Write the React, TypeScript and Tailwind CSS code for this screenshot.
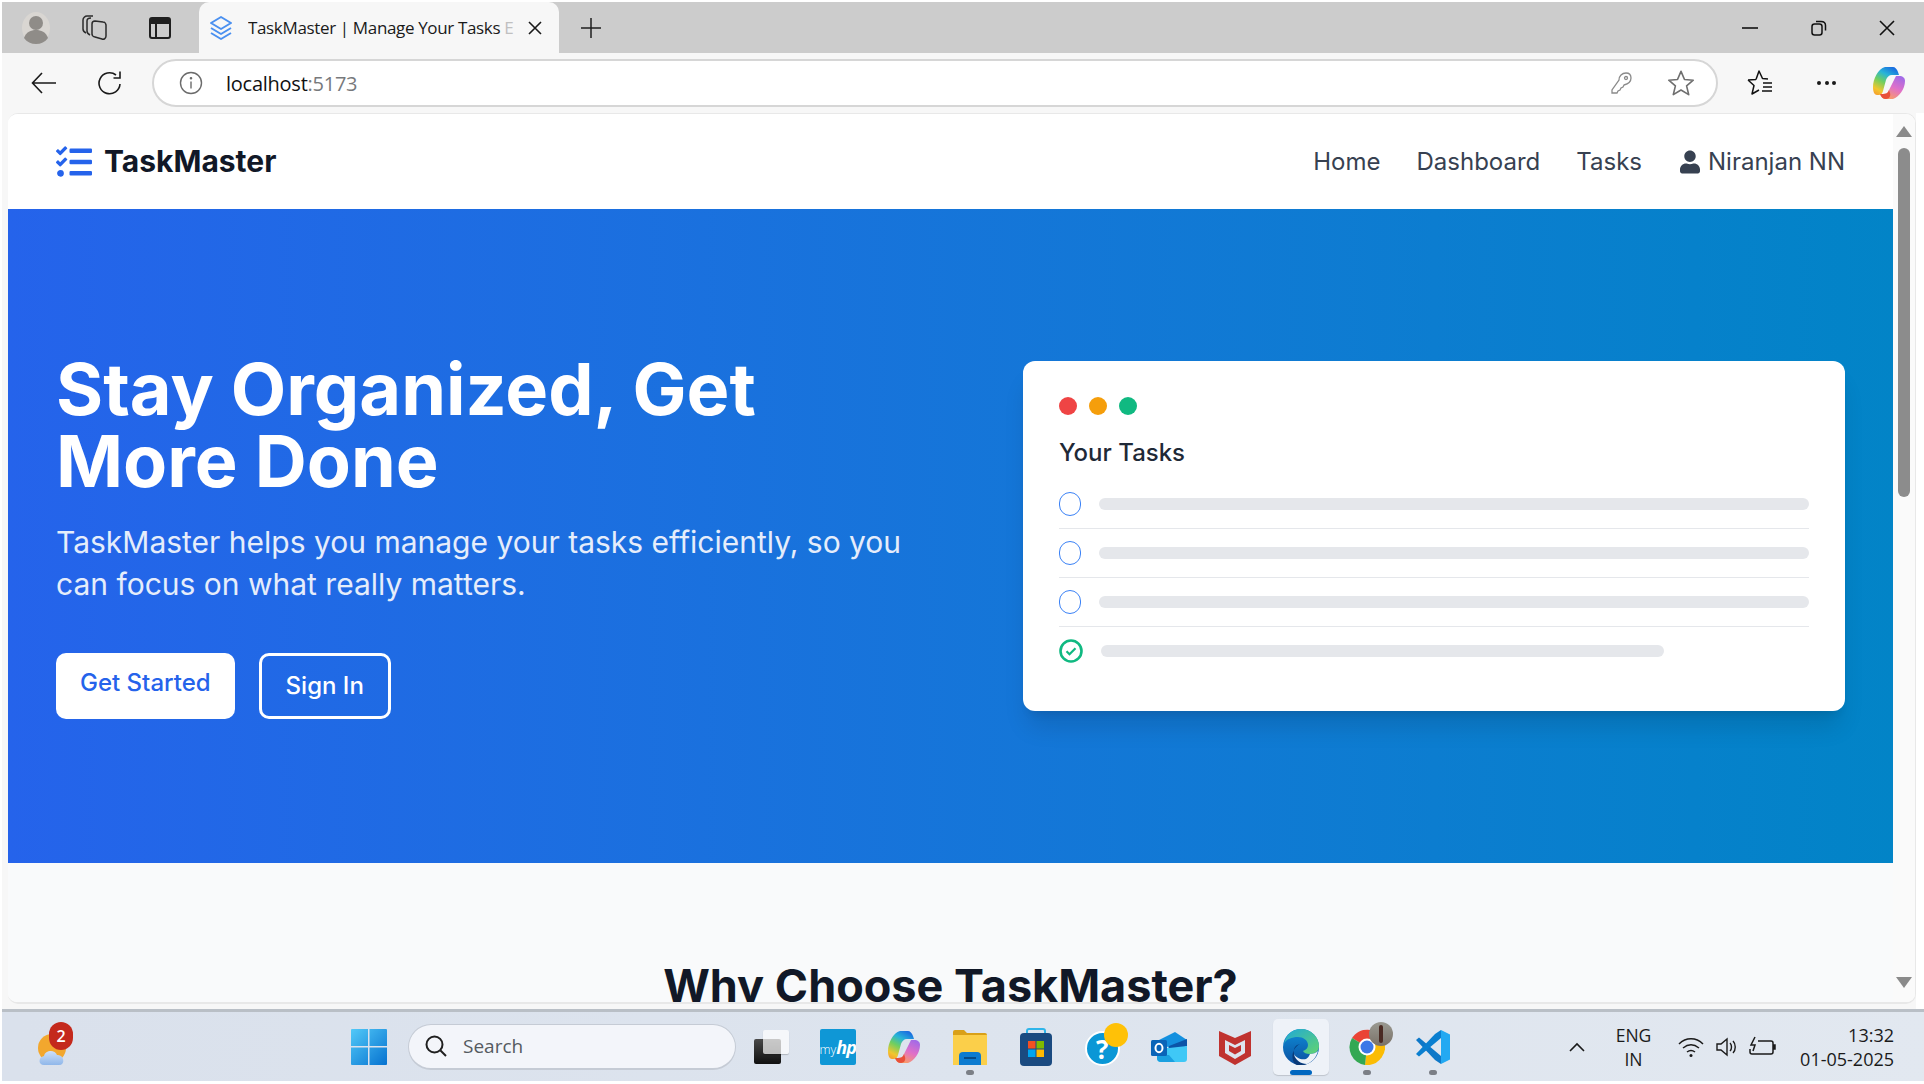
import React from "react";
import { FaTasks, FaUser } from "react-icons/fa";

const ui = "font-['Open_Sans','Noto_Sans',sans-serif]";

function Slot({ w = "w-[66.4px]", dot, active, children }: { w?: string; dot?: boolean; active?: boolean; children: React.ReactNode }) {
  return (
    <div className={`relative h-[56px] flex items-center justify-center shrink-0 ${w}`}>
      {active && <span className="absolute left-1/2 -ml-[28px] top-0 w-[56px] h-[56px] rounded-[5px] bg-[#eef2f8] shadow-[0_1px_1px_rgba(0,0,0,0.15)]" />}
      <div className="relative flex items-center justify-center">{children}</div>
      {dot && <span className="absolute bottom-[0px] left-1/2 -ml-[4px] w-[8px] h-[5px] rounded-full bg-[#7b7f86]" />}
      {active && <span className="absolute bottom-[0px] left-1/2 -ml-[11px] w-[22px] h-[5px] rounded-full bg-[#0067c0]" />}
    </div>
  );
}

function Copilot({ s = 36 }: { s?: number }) {
  return (
    <svg width={s} height={s} viewBox="0 0 36 36">
      <defs>
        <linearGradient id="cpb" x1="0.7" y1="0" x2="0.2" y2="1"><stop offset="0" stopColor="#1a6fe0" /><stop offset="0.28" stopColor="#27b4d8" /><stop offset="0.55" stopColor="#6fcf60" /><stop offset="0.85" stopColor="#f2c62e" /><stop offset="1" stopColor="#f5a52e" /></linearGradient>
        <linearGradient id="cpc" x1="0.8" y1="0" x2="0.3" y2="1"><stop offset="0" stopColor="#a06ae8" /><stop offset="0.5" stopColor="#e070c8" /><stop offset="1" stopColor="#fba060" /></linearGradient>
      </defs>
      <path d="M2 22C2 14 7 4 14 2h8c2 0 4 2 5 5l1 3h-7c-3 0-5 2-6 5l-3 11c-1 4-3 4-6 4-3 0-4-4-4-8z" fill="url(#cpb)" />
      <path d="M25 11h3c4 0 6 2 6 5 0 8-6 16-12 18h-7c-3 0-5-2-6-5h3c3 0 5-1 6-4z" fill="url(#cpc)" />
      <path d="M9 29h3c3 0 5-1 6-4l1 3c1 3-1 6-4 6-3 0-5-2-6-5z" fill="#e8503a" />
    </svg>
  );
}

function TaskRow({ done, last, w = "w-full" }: { done?: boolean; last?: boolean; w?: string }) {
  return (
    <div className={`flex items-center ${last ? "h-[48px]" : "h-[49px] border-b border-[#e5e7eb]"}`}>
      {done ? (
        <svg width="24" height="24" viewBox="0 0 24 24" className="shrink-0 mr-[18px]">
          <circle cx="12" cy="12" r="10.5" fill="none" stroke="#10b981" strokeWidth="2.6" />
          <path d="M7.5 12.2l3 3 6-6" fill="none" stroke="#10b981" strokeWidth="2.2" />
        </svg>
      ) : (
        <span className="shrink-0 w-[22px] h-[24px] rounded-full border border-[#3b82f6] mr-[18px]" />
      )}
      <div className="flex-1 min-w-0">
        <div className={`h-[12px] rounded-full bg-[#e5e7eb] ${w}`} />
      </div>
    </div>
  );
}

export default function App() {
  return (
    <div className="w-[1924px] h-[1084px] overflow-hidden bg-white flex flex-col">
      {/* tab strip */}
      <div className={`mt-[2px] ml-[2px] h-[51px] shrink-0 bg-[#cccccc] flex items-center ${ui}`}>
        <div className="w-[67px] flex justify-center">
          <svg width="30" height="34" viewBox="0 0 30 34">
            <ellipse cx="15" cy="17" rx="14" ry="16" fill="#d9d6d2" />
            <circle cx="15" cy="12" r="7" fill="#8f8c88" />
            <path d="M3 27c2-6 7-8 12-8s10 2 12 8c-3 4-7 6-12 6s-9-2-12-6z" fill="#8f8c88" />
          </svg>
        </div>
        <div className="w-[52px] flex justify-center">
          <svg width="26" height="28" viewBox="0 0 26 28" fill="none" stroke="#2b2b2b" strokeWidth="1.5" strokeLinejoin="round">
            <path d="M8 21c-2-1-3-2-3-4V7c0-2 2-3 4-3" />
            <path d="M4 19c-2-1-3-2-3-4V6c0-2 2-4 4-4h6" />
            <path d="M10 10c0-2 1-3 3-3l8 1c2 0 3 2 3 3v11c0 2-2 4-4 3l-7-2c-2 0-3-2-3-3z" />
          </svg>
        </div>
        <div className="w-[78px] flex justify-center">
          <div className="w-[22px] h-[22px] rounded-[3px] border-2 border-[#1f1f1f] relative">
            <div className="h-[5px] bg-[#1f1f1f]" />
            <div className="absolute left-[4px] top-[5px] bottom-0 w-[1.5px] bg-[#1f1f1f]" />
          </div>
        </div>
        <div className="relative self-stretch w-[360px] bg-[#f7f7f7] rounded-t-[10px] flex items-center">
          <svg width="24" height="26" viewBox="0 0 24 26" className="ml-[10px]" fill="none" stroke="#4a90f0" strokeWidth="2" strokeLinejoin="round">
            <path d="M12 2l10 6-10 6-10-6z" />
            <path d="M2 13l10 6 10-6" />
            <path d="M2 18l10 6 10-6" />
          </svg>
          <span className="ml-[15px] text-[17px] tracking-[-0.35px] text-[#1a1a1a] whitespace-nowrap w-[268px] overflow-hidden">TaskMaster | Manage Your Tasks <span className="text-[#c0c0c0]">E</span></span>
          <svg width="16" height="16" viewBox="0 0 16 16" className="ml-[11px]" stroke="#1a1a1a" strokeWidth="1.6"><path d="M2 2l12 12M14 2L2 14" /></svg>
        </div>
        <svg width="22" height="22" viewBox="0 0 22 22" className="ml-[21px]" stroke="#1f1f1f" strokeWidth="1.5"><path d="M11 1v20M1 11h20" /></svg>
        <div className="flex-1" />
        <svg width="16" height="16" viewBox="0 0 16 16" className="mr-[53px]" stroke="#111" strokeWidth="1.6"><path d="M0 8h16" /></svg>
        <svg width="16" height="16" viewBox="0 0 16 16" className="mr-[52px]" fill="none" stroke="#111" strokeWidth="1.5"><rect x="1" y="4" width="10" height="11" rx="2.5" /><path d="M5 1.5h5c3 0 4.500 1.500 4.500 4v5" /></svg>
        <svg width="16" height="16" viewBox="0 0 16 16" className="mr-[29px]" stroke="#111" strokeWidth="1.6"><path d="M1 1l14 14M15 1L1 15" /></svg>
      </div>

      {/* toolbar */}
      <div className={`ml-[2px] h-[60px] shrink-0 bg-[#f7f7f7] flex items-center ${ui}`}>
        <svg width="26" height="24" viewBox="0 0 26 24" className="ml-[29px]" fill="none" stroke="#1a1a1a" strokeWidth="1.6"><path d="M25 12H2M11 2L1.500 12l9.500 10" /></svg>
        <svg width="26" height="26" viewBox="0 0 26 26" className="ml-[40px]" fill="none" stroke="#1a1a1a" strokeWidth="1.6"><path d="M23 14a10.500 10.500 0 1 1-4-9" /><path d="M23 1.500V8h-6.500" /></svg>
        <div className="ml-[29px] w-[1566px] h-[48px] rounded-full bg-white border-2 border-[#d6d6d6] flex items-center">
          <svg width="24" height="24" viewBox="0 0 24 24" className="ml-[25px]" fill="none" stroke="#6b6b6b" strokeWidth="1.4"><circle cx="12" cy="12" r="10.500" /><path d="M12 10.500v7" /><circle cx="12" cy="7.200" r="0.6" fill="#6b6b6b" /></svg>
          <span className="ml-[23px] mt-[1px] text-[20px] tracking-[-0.25px] text-[#111] whitespace-nowrap">localhost<span className="text-[#77797c]">:5173</span></span>
          <div className="flex-1" />
          <svg width="22" height="24" viewBox="0 0 22 24" fill="none" stroke="#8a8a8a" strokeWidth="1.300"><path d="M9 9c0-4 3-7 7-7 3 0 5 2 5 5 0 4-3 6-7 7l-1 2-2 1-1 2-2 1-1 2H2l0-3z" /><circle cx="16" cy="7" r="1.500" /></svg>
          <svg width="28" height="28" viewBox="0 0 24 24" className="ml-[35px] mr-[21px]" fill="none" stroke="#6f6f6f" strokeWidth="1.4" strokeLinejoin="round"><path d="M12 2l3 7 7.500.6-5.700 4.900 1.800 7.500L12 18l-6.600 4 1.800-7.500L1.500 9.600 9 9z" /></svg>
        </div>
        <svg width="28" height="28" viewBox="0 0 28 28" className="ml-[27px]" fill="none" stroke="#111" strokeWidth="1.500" strokeLinejoin="round"><path d="M11 10.500L14 2l3.500 7.500 5.500.5M3 11l8-.5M3 11l6 5.500L7 25l7-4" /><path d="M18 14h9M18 18h9M17 22h10" /></svg>
        <div className="ml-[44px] flex gap-[3.500px]">
          <span className="w-[4px] h-[4px] rounded-full bg-[#1a1a1a]" /><span className="w-[4px] h-[4px] rounded-full bg-[#1a1a1a]" /><span className="w-[4px] h-[4px] rounded-full bg-[#1a1a1a]" />
        </div>
        <div className="ml-[35px]"><Copilot s={36} /></div>
      </div>

      {/* viewport */}
      <div className="ml-[2px] mr-[8px] h-[897px] shrink-0 bg-[#f7f7f7] pl-[6px] pb-[6px]">
        <div className="h-[891px] rounded-[10px] overflow-hidden bg-white border-b-2 border-r border-t border-[#e8e8e8] flex font-['Inter',sans-serif]">
          <div className="w-[1885px] shrink-0 h-[891px] overflow-hidden bg-[#f9fafb]">
            <nav className="h-[95px] bg-white flex items-center justify-between px-[48px]">
              <div className="flex items-center gap-[12px]">
                <FaTasks className="text-[#2563eb] w-[36px] h-[36px]" />
                <span className="text-[30px] font-bold text-[#111827]">TaskMaster</span>
              </div>
              <div className="flex items-center text-[24px] text-[#374151]">
                <span>Home</span>
                <span className="ml-[36px]">Dashboard</span>
                <span className="ml-[36px]">Tasks</span>
                <span className="ml-[38px] flex items-center gap-[8px]"><FaUser className="w-[20px] h-[24px]" />Niranjan NN</span>
              </div>
            </nav>
            <section className="h-[654px] bg-gradient-to-r from-[#2563eb] to-[#0284c7] flex items-center justify-between px-[48px]">
              <div className="w-[860px]">
                <h1 className="text-[72px] leading-[72px] font-bold text-white">Stay Organized, Get<br />More Done</h1>
                <p className="mt-[24px] text-[30px] leading-[42px] text-[#e5edfb]">TaskMaster helps you manage your tasks efficiently, so you can focus on what really matters.</p>
                <div className="mt-[48px] flex gap-[24px]">
                  <span className="h-[66px] px-[24px] pb-[7px] rounded-[10px] bg-white text-[#2563eb] text-[24px] font-medium flex items-center">Get Started</span>
                  <span className="h-[66px] px-[24px] rounded-[10px] border-[3px] border-white text-white text-[24px] font-medium flex items-center">Sign In</span>
                </div>
              </div>
              <div className="w-[822px] h-[350px] bg-white rounded-[12px] p-[36px] shadow-[0_20px_25px_-5px_rgba(0,0,0,0.12),0_8px_10px_-6px_rgba(0,0,0,0.1)]">
                <div className="flex gap-[12px]">
                  <span className="w-[18px] h-[18px] rounded-full bg-[#ef4444]" />
                  <span className="w-[18px] h-[18px] rounded-full bg-[#f59e0b]" />
                  <span className="w-[18px] h-[18px] rounded-full bg-[#10b981]" />
                </div>
                <h3 className="mt-[23px] text-[24px] leading-[30px] font-medium text-[#1f2937]">Your Tasks</h3>
                <div className="mt-[12px]">
                  <TaskRow />
                  <TaskRow />
                  <TaskRow />
                  <TaskRow done last w="w-[79.5%]" />
                </div>
              </div>
            </section>
            <h2 className="mt-[95px] text-center text-[45px] leading-[56px] font-bold text-[#111827]">Why Choose TaskMaster?</h2>
          </div>
          <div className="flex-1 bg-[#fafafa] relative">
            <div className="mx-auto mt-[12px] w-0 h-0 border-x-[8px] border-x-transparent border-b-[11px] border-b-[#8a8a8a]" />
            <div className="mx-auto mt-[11px] w-[12px] h-[349px] rounded-full bg-[#8c8c8c]" />
            <div className="absolute left-1/2 -ml-[8px] bottom-[14px] w-0 h-0 border-x-[8px] border-x-transparent border-t-[11px] border-t-[#8a8a8a]" />
          </div>
        </div>
      </div>

      {/* taskbar */}
      <div className={`h-[72px] shrink-0 ml-[2px] mt-[-1px] border-t-[3px] border-[#b9bfc6] bg-gradient-to-r from-[#dae1ec] via-[#dde4ee] to-[#e2e8f0] flex items-center ${ui}`}>
        <div className="relative ml-[35px] w-[40px] h-[46px] shrink-0">
          <svg width="40" height="46" viewBox="0 0 40 46" className="absolute inset-0">
            <defs><linearGradient id="cl" x1="0" y1="0" x2="0" y2="1"><stop offset="0" stopColor="#cfe0f8" /><stop offset="1" stopColor="#8fb7ea" /></linearGradient></defs>
            <circle cx="15" cy="24" r="14" fill="#f2a72e" />
            <path d="M7 41c-6 0-6-8 0-9 1-6 11-7 13-1 7-1 9 10 2 10z" fill="url(#cl)" />
          </svg>
          <span className="absolute -top-[2px] left-[12px] w-[24px] h-[28px] rounded-full bg-[#c4291c] text-white text-[16px] font-semibold flex items-center justify-center">2</span>
        </div>
        <svg width="36" height="36" viewBox="0 0 36 36" className="ml-[274px] shrink-0">
          <defs><linearGradient id="w" x1="0" y1="0" x2="1" y2="1"><stop offset="0" stopColor="#52c9f8" /><stop offset="1" stopColor="#0672d0" /></linearGradient></defs>
          <path d="M0 1a1 1 0 0 1 1-1h16v17H0zM18.500 0H35a1 1 0 0 1 1 1v16H18.500zM0 18.500h17V36H1a1 1 0 0 1-1-1zM18.500 18.500H36V35a1 1 0 0 1-1 1H18.500z" fill="url(#w)" />
        </svg>
        <div className="ml-[21px] w-[328px] h-[46px] shrink-0 rounded-full bg-[#f3f5fa] border border-[#c5cbd5] border-b-2 flex items-center">
          <svg width="24" height="24" viewBox="0 0 24 24" className="ml-[15px]" fill="none" stroke="#1f1f1f" strokeWidth="2"><circle cx="10.500" cy="10.500" r="8" /><path d="M16.500 16.500L22 22" /></svg>
          <span className="ml-[15px] text-[19px] text-[#555a60]">Search</span>
        </div>
        <Slot w="w-[69px]">
          <div className="relative ml-[2px] w-[35px] h-[34px]">
            <div className="absolute left-0 bottom-0 w-[27px] h-[25px] rounded-[2px] bg-gradient-to-b from-[#4a4a4a] to-[#111]" />
            <div className="absolute right-0 top-0 w-[26px] h-[24px] rounded-[2px] bg-[#ffffff]/70 shadow-[0_1px_1px_rgba(0,0,0,0.2)]" />
          </div>
        </Slot>
        <Slot w="w-[65.4px]">
          <div className="w-[36px] h-[36px] rounded-[2px] bg-[#0f97d6] text-white flex items-baseline justify-center whitespace-nowrap overflow-hidden">
            <span className="text-[12.500px] leading-[36px] font-light">my</span><span className="text-[18px] leading-[36px] font-bold italic tracking-[-1px]">hp</span>
          </div>
        </Slot>
        <Slot><Copilot s={36} /></Slot>
        <Slot dot>
          <svg width="34" height="36" viewBox="0 0 34 36">
            <path d="M0 3a2 2 0 0 1 2-2h9l3 3h18a2 2 0 0 1 2 2v4H0z" fill="#d9a018" />
            <path d="M0 6h34v30H0z" fill="#fbcf4a" />
            <path d="M6 36V27a4 4 0 0 1 4-4h14a4 4 0 0 1 4 4v9z" fill="#0c7bd0" />
            <path d="M11 29h12" stroke="#064a86" strokeWidth="2" />
          </svg>
        </Slot>
        <Slot>
          <svg width="34" height="38" viewBox="0 0 34 38">
            <path d="M8 8V3a2 2 0 0 1 2-2h14a2 2 0 0 1 2 2v5" fill="none" stroke="#2fb5ea" strokeWidth="2" />
            <rect x="1" y="5" width="32" height="33" rx="4" fill="#1a4a80" />
            <rect x="9" y="13" width="7.500" height="7.500" fill="#f25022" /><rect x="17.500" y="13" width="7.500" height="7.500" fill="#7fba00" />
            <rect x="9" y="21.500" width="7.500" height="7.500" fill="#00a4ef" /><rect x="17.500" y="21.500" width="7.500" height="7.500" fill="#ffb900" />
          </svg>
        </Slot>
        <Slot>
          <div className="relative w-[36px] h-[36px] mt-[3px]">
            <div className="absolute left-0 bottom-0 w-[35px] h-[35px] rounded-full bg-[#0a97d6] border-2 border-white text-white font-bold text-[26px] leading-none flex items-center justify-center">?</div>
            <div className="absolute left-[19px] top-[-7px] w-[24px] h-[24px] rounded-full bg-[#ffc107]" />
          </div>
        </Slot>
        <Slot>
          <svg width="36" height="30" viewBox="0 0 36 30">
            <path d="M8 8L24 0l12 8-18 8z" fill="#1490df" />
            <path d="M18 14l18-7v7l-18 7z" fill="#0b54a8" />
            <path d="M6 16h12l18-2v13a3 3 0 0 1-3 3H10a4 4 0 0 1-4-4z" fill="#3fc8f6" />
            <path d="M6 23h12l6 7H10a4 4 0 0 1-4-4z" fill="#1aa0e0" />
            <rect x="0" y="8" width="16" height="16" rx="1.500" fill="#0a64b8" />
            <ellipse cx="8" cy="16" rx="3.500" ry="4.200" fill="none" stroke="#fff" strokeWidth="2" />
          </svg>
        </Slot>
        <Slot w="w-[65px]">
          <svg width="32" height="36" viewBox="0 0 32 36"><path d="M0 2l16 7 16-7v25l-16 9-16-9z" fill="#c0322f" /><path d="M6 11l10 5 10-5v13l-10 6-10-6z" fill="#dde4ee" /><path d="M10 16v6l6 3.500 6-3.500v-6l-6 3z" fill="#c0322f" /></svg>
        </Slot>
        <Slot active>
          <svg width="36" height="36" viewBox="0 0 36 36">
            <defs>
              <linearGradient id="e1" x1="0" y1="0" x2="1" y2="1"><stop offset="0" stopColor="#1fa8d8" /><stop offset="1" stopColor="#62d470" /></linearGradient>
              <linearGradient id="e2" x1="0" y1="0" x2="0" y2="1"><stop offset="0" stopColor="#0f8ed8" /><stop offset="1" stopColor="#0b4fa0" /></linearGradient>
            </defs>
            <circle cx="18" cy="18" r="18" fill="url(#e2)" />
            <path d="M1 15C3 5 10 0 18 0c10 0 18 8 18 17 0 5-4 8-9 8-4 0-6-1-7-3 3-1 5-3 5-6 0-5-5-8-10-8C9 8 3 10 1 15z" fill="url(#e1)" />
            <path d="M17 15c-5 1-7 5-6 10 1 6 7 10 13 10-4 2-9 1-10 1C8 34 7 20 17 15z" fill="#0a3a78" />
            <path d="M27 25c3 0 6-1 8-3-2 7-6 11-11 13-6 0-12-4-13-10 2 4 7 6 12 5 2-1 3-3 4-5z" fill="#eef2f8" />
          </svg>
        </Slot>
        <Slot dot>
          <div className="relative w-[36px] h-[36px]">
            <svg width="36" height="36" viewBox="0 0 36 36">
              <path d="M18 18L3 9A18 18 0 0 1 34 10z" fill="#ea4335" />
              <path d="M18 18l16-8a18 18 0 0 1-18 26z" fill="#fbbc04" />
              <path d="M18 18l-2 18A18 18 0 0 1 3 9z" fill="#34a853" />
              <circle cx="18" cy="18" r="8.500" fill="#fff" /><circle cx="18" cy="18" r="6.500" fill="#3b78e7" />
            </svg>
            <div className="absolute right-[-8px] top-[-7px] w-[24px] h-[24px] rounded-full bg-gradient-to-b from-[#9a9a92] to-[#7a7268] flex justify-center">
              <span className="mt-[3px] w-[4px] h-[18px] rounded-full bg-[#4a2a22]" />
            </div>
          </div>
        </Slot>
        <Slot dot>
          <svg width="36" height="36" viewBox="0 0 36 36">
            <path d="M1 11l3-2.500L26 27v8l-6-4z" fill="#0e78c8" />
            <path d="M1 25l3 2.500L26 9V1l-6 4z" fill="#0a7fd0" />
            <path d="M26 1l9 4.500v25L26 35z" fill="#23a9f2" />
          </svg>
        </Slot>
        <svg width="16" height="10" viewBox="0 0 16 10" className="ml-[102px] shrink-0" fill="none" stroke="#1a1a1a" strokeWidth="1.600"><path d="M1 9l7-7 7 7" /></svg>
        <div className="ml-[24px] w-[50px] shrink-0 text-center text-[17.500px] leading-[24px] text-[#1a1a1a]">ENG<br />IN</div>
        <svg width="26" height="22" viewBox="0 0 26 22" className="ml-[19px] shrink-0" fill="none" stroke="#1a1a1a" strokeWidth="1.500"><path d="M1 8c7-7 17-7 24 0M5 12c5-4 11-4 16 0M9 16c2.500-2 5.500-2 8 0" /><circle cx="13" cy="19.500" r="1.500" fill="#1a1a1a" stroke="none" /></svg>
        <svg width="24" height="22" viewBox="0 0 24 22" className="ml-[12px] shrink-0" fill="none" stroke="#1a1a1a" strokeWidth="1.400"><path d="M1 8v6h4l6 5V3L5 8z" /><path d="M14 7c2 2 2 6 0 8M17 5c3 3 3 9 0 12" /></svg>
        <svg width="28" height="22" viewBox="0 0 28 22" className="ml-[8px] shrink-0" fill="none" stroke="#1a1a1a" strokeWidth="1.500"><path d="M10 5h13a2 2 0 0 1 2 2v9a2 2 0 0 1-2 2H4a2 2 0 0 1-2-2v-3" /><path d="M7 1L3 9h4l-2 6" /><path d="M25 9h2v4h-2" fill="#1a1a1a" /></svg>
        <div className="ml-[6.500px] w-[112px] shrink-0 text-right text-[18px] leading-[24px] text-[#1a1a1a]">13:32<br />01-05-2025</div>
      </div>
    </div>
  );
}
